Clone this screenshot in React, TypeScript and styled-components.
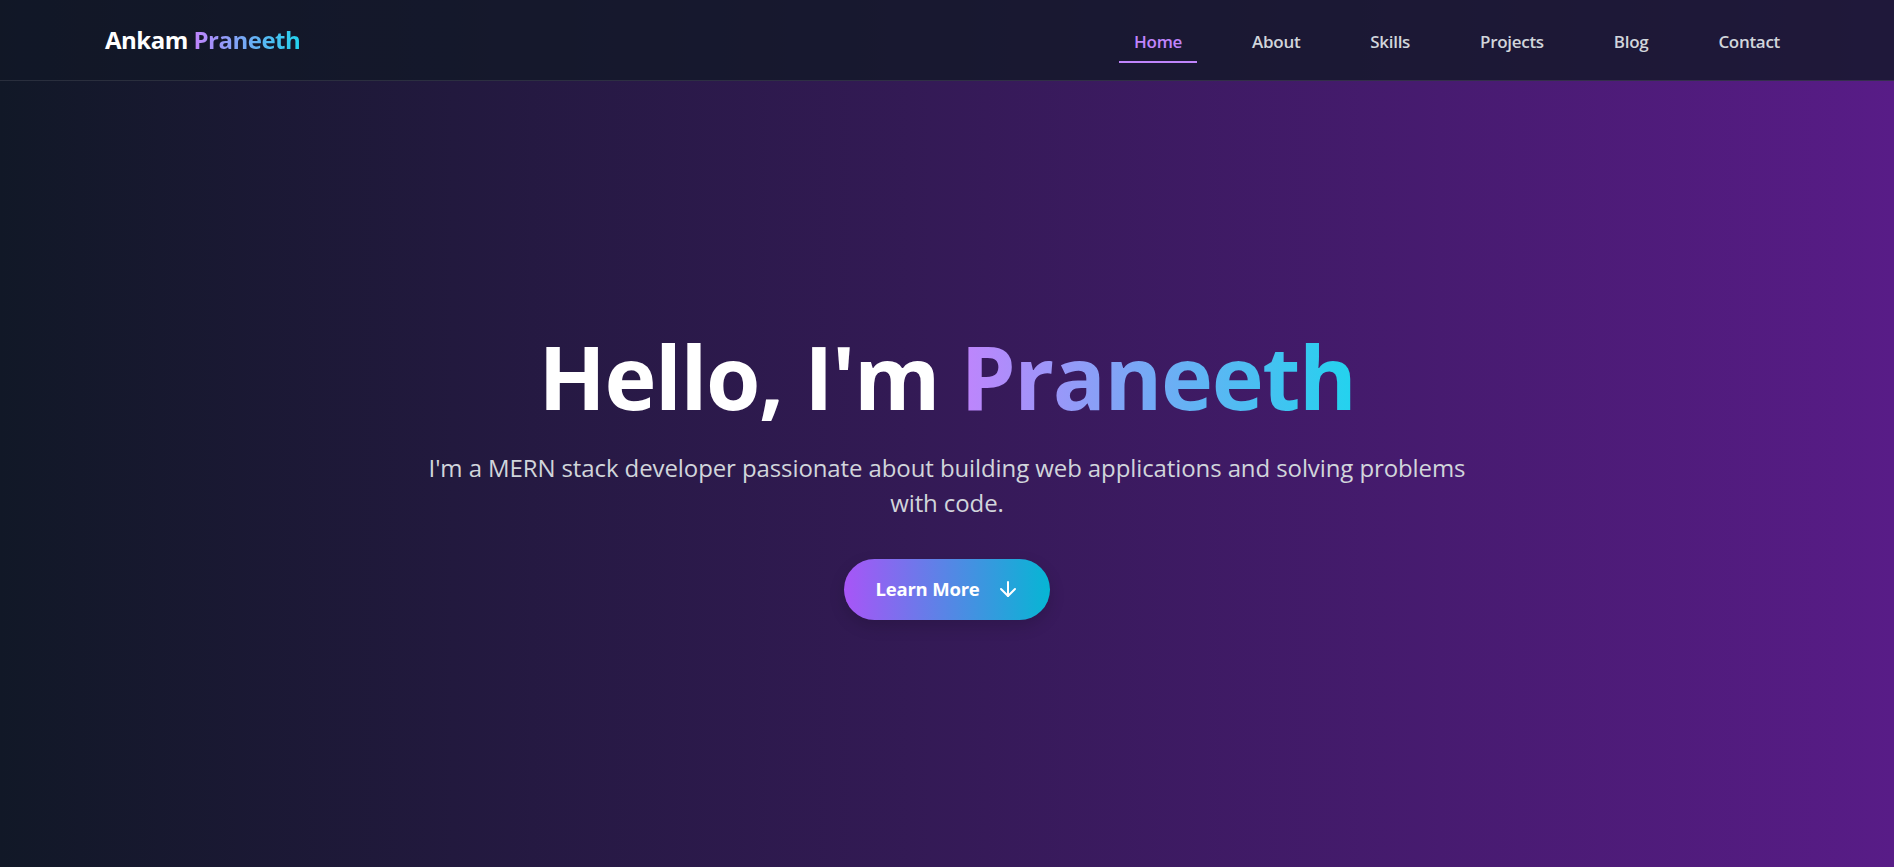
import React from "react";
import styled, { createGlobalStyle } from "styled-components";
import { ArrowDown } from "lucide-react";

const GlobalStyle = createGlobalStyle`
  html, body {
    margin: 0;
    padding: 0;
    background: #111827;
  }
  * { box-sizing: border-box; }
  body {
    font-family: "Open Sans", "Noto Sans", "Liberation Sans", sans-serif;
    -webkit-font-smoothing: antialiased;
  }
`;

const Page = styled.div`
  min-height: 100vh;
  display: flex;
  flex-direction: column;
  background: linear-gradient(to right, #111827 0%, #581c87 100%);
  color: #ffffff;
`;

const Header = styled.header`
  height: 81px;
  flex: none;
  display: flex;
  align-items: center;
  justify-content: space-between;
  padding: 0 99px 0 105px;
  background: rgba(17, 24, 39, 0.8);
  border-bottom: 1px solid rgba(255, 255, 255, 0.1);
`;

const Logo = styled.div`
  font-size: 24px;
  font-weight: 700;
  letter-spacing: -0.5px;
  color: #ffffff;
  margin-top: -2px;
`;

const GradientText = styled.span`
  background: linear-gradient(to right, #c084fc, #22d3ee);
  -webkit-background-clip: text;
  background-clip: text;
  color: transparent;
`;

const NavList = styled.nav`
  display: flex;
  align-items: center;
  gap: 40px;
`;

const NavLink = styled.a<{ $active?: boolean }>`
  display: block;
  padding: 8px 15px 8px;
  margin-top: 4px;
  font-size: 17px;
  font-weight: 600;
  letter-spacing: -0.3px;
  color: ${(p) => (p.$active ? "#c084fc" : "#d1d5db")};
  text-decoration: none;
  border-bottom: 2px solid ${(p) => (p.$active ? "#c084fc" : "transparent")};
`;

const Hero = styled.section`
  flex: 1;
  display: flex;
  flex-direction: column;
  align-items: center;
  justify-content: center;
  text-align: center;
  padding: 0 24px;
`;

const Title = styled.h1`
  margin: 0;
  font-size: 88px;
  line-height: 1.1;
  font-weight: 700;
  letter-spacing: -1.4px;
  color: #ffffff;
`;

const Subtitle = styled.p`
  margin: 26px 0 0;
  max-width: 1060px;
  font-size: 24px;
  line-height: 35px;
  letter-spacing: -0.1px;
  color: #d1d5db;
`;

const CtaButton = styled.a`
  margin-top: 39px;
  height: 61px;
  display: inline-flex;
  align-items: center;
  gap: 16px;
  padding: 0 30px 2px 31px;
  border-radius: 9999px;
  background: linear-gradient(to right, #a855f7, #06b6d4);
  color: #ffffff;
  font-size: 18.5px;
  font-weight: 700;
  letter-spacing: -0.2px;
  text-decoration: none;
  box-shadow: 0 6px 16px rgba(0, 0, 0, 0.15);
`;

const links = ["Home", "About", "Skills", "Projects", "Blog", "Contact"];

export default function App() {
  return (
    <>
      <GlobalStyle />
      <Page>
        <Header>
          <Logo>
            Ankam <GradientText>Praneeth</GradientText>
          </Logo>
          <NavList>
            {links.map((l) => (
              <NavLink key={l} href="#" $active={l === "Home"}>
                {l}
              </NavLink>
            ))}
          </NavList>
        </Header>
        <Hero>
          <Title>
            Hello, I'm <GradientText>Praneeth</GradientText>
          </Title>
          <Subtitle>
            I'm a MERN stack developer passionate about building web
            applications and solving problems with code.
          </Subtitle>
          <CtaButton href="#">
            Learn More
            <ArrowDown size={24} strokeWidth={2} />
          </CtaButton>
        </Hero>
      </Page>
    </>
  );
}
